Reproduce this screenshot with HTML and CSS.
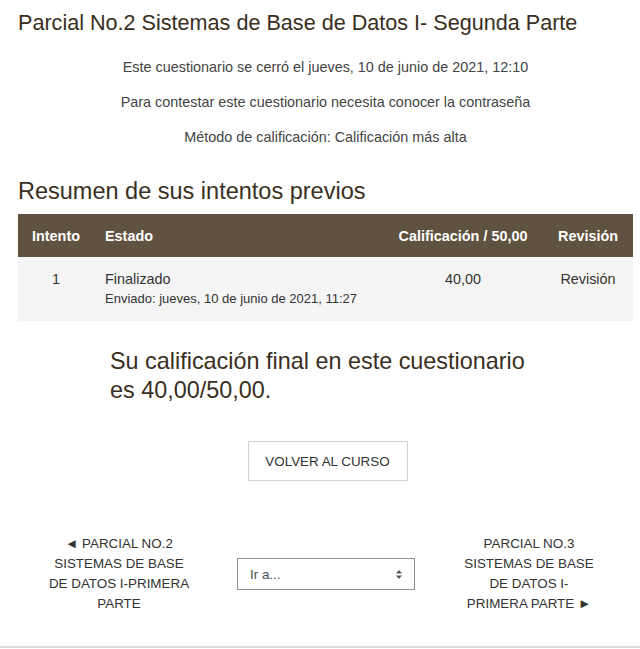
FILE: index.html
```html
<!DOCTYPE html>
<html lang="es">
<head>
<meta charset="utf-8">
<title>Parcial No.2</title>
<link rel="stylesheet" href="styles.css">
</head>
<body>
<div class="page">
  <h2 class="title">Parcial No.2 Sistemas de Base de Datos I- Segunda Parte</h2>
  <div class="info">
    <p>Este cuestionario se cerró el jueves, 10 de junio de 2021, 12:10</p>
    <p>Para contestar este cuestionario necesita conocer la contraseña</p>
    <p>Método de calificación: Calificación más alta</p>
  </div>
  <h3 class="summary">Resumen de sus intentos previos</h3>
  <table class="attempts">
    <thead>
      <tr>
        <th class="c-num">Intento</th>
        <th class="c-state">Estado</th>
        <th class="c-grade">Calificación / 50,00</th>
        <th class="c-rev">Revisión</th>
      </tr>
    </thead>
    <tbody>
      <tr>
        <td class="c-num">1</td>
        <td class="c-state">Finalizado<span class="sub">Enviado: jueves, 10 de junio de 2021, 11:27</span></td>
        <td class="c-grade">40,00</td>
        <td class="c-rev">Revisión</td>
      </tr>
    </tbody>
  </table>
  <div class="feedback">
    <h3>Su calificación final en este cuestionario es 40,00/50,00.</h3>
  </div>
  <div class="btnrow">
    <button class="btn">VOLVER AL CURSO</button>
  </div>
  <div class="nav">
    <a class="navlink">◄ PARCIAL NO.2 SISTEMAS DE BASE DE DATOS I-PRIMERA PARTE</a>
    <div class="jump">
      <span>Ir a...</span>
      <svg width="8" height="11" viewBox="0 0 8 11"><path d="M4 1 L7 4.5 H1 Z M4 10 L7 6.5 H1 Z" fill="#555"/></svg>
    </div>
    <a class="navlink right">PARCIAL NO.3 SISTEMAS DE BASE DE DATOS I-<br>PRIMERA PARTE ►</a>
  </div>
</div>
<div class="rule"></div>
</body>
</html>
```
FILE: styles.css
```css
* { box-sizing: border-box; }
html, body { margin: 0; padding: 0; background: #fff; }
body {
  font-family: "Liberation Sans", Arial, sans-serif;
  color: #3a3226;
  font-size: 14.4px;
}
.page { padding: 0 7px 0 18px; }
.title {
  margin: 0;
  padding-top: 10px;
  font-size: 21.6px;
  font-weight: normal;
  line-height: 26px;
  color: #3a2f22;
}
.info { text-align: center; color: #444; padding-top: 14px; }
.info p { margin: 0; line-height: 35px; font-size: 14.4px; }
.summary {
  margin: 0;
  padding-top: 21px;
  font-size: 23.5px;
  font-weight: normal;
  line-height: 30px;
  color: #3a2f22;
}
.attempts {
  margin-top: 8px;
  width: 615px;
  border-collapse: collapse;
}
.attempts th {
  background: #5f5241;
  color: #fff;
  font-weight: bold;
  height: 43px;
  padding: 0 14px;
  font-size: 14.4px;
  white-space: nowrap;
}
.attempts td {
  background: #f5f5f5;
  color: #333;
  vertical-align: top;
  padding: 12px 14px 12px;
  line-height: 20px;
}
.attempts .c-state { padding-left: 11px; }
.c-num { text-align: center; width: 76px; }
.c-state { text-align: left; }
.c-grade { text-align: center; width: 160px; }
.c-rev { text-align: center; width: 90px; }
.sub { display: block; font-size: 13px; color: #333; }
.feedback {
  width: 420px;
  margin: 26px 0 0 92px;
}
.feedback h3 {
  margin: 0;
  font-size: 23.4px;
  font-weight: normal;
  line-height: 29px;
  color: #3a2f22;
}
.btnrow { display: flex; justify-content: center; padding-top: 36px; padding-left: 4px; }
.btn {
  width: 160px;
  height: 40px;
  background: #fff;
  border: 1px solid #cdd0d4;
  font-family: inherit;
  font-size: 13.4px;
  color: #333;
  cursor: pointer;
}
.nav {
  display: flex;
  align-items: center;
  padding-top: 53px;
  padding-bottom: 32px;
  margin-left: 12px;
}
.navlink {
  width: 178px;
  text-align: center;
  font-size: 13.4px;
  line-height: 20px;
  color: #333;
  padding: 0 18px;
}
.navlink.right { margin-left: 25px; }
.jump {
  margin-left: 29px;
  width: 178px;
  height: 32px;
  border: 1px solid #8e9399;
  display: flex;
  align-items: center;
  justify-content: space-between;
  padding: 0 11px 0 12px;
  font-size: 13.4px;
  color: #495057;
}
.rule { border-top: 2px solid #dedede; }
```
